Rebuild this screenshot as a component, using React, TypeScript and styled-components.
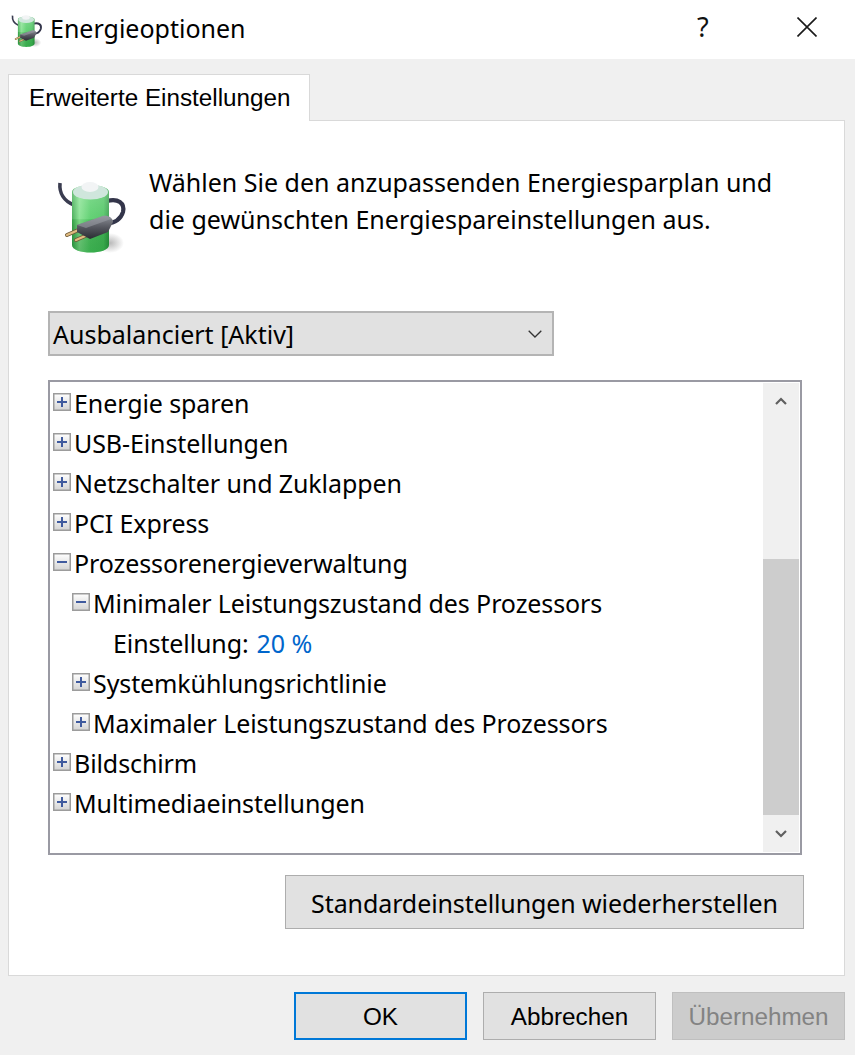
import React from 'react';
import styled, { createGlobalStyle } from 'styled-components';

const GlobalStyle = createGlobalStyle`
  html, body {
    margin: 0;
    padding: 0;
    background: #f0f0f0;
  }
  * {
    box-sizing: border-box;
  }
`;

const UI_FONT = `"Noto Sans", "Open Sans", sans-serif`;
const CONTROL_FONT = `"Liberation Sans", Arial, sans-serif`;

const PowerIcon: React.FC<{ size: number; id: string; className?: string }> = ({ size, id, className }) => (
  <svg className={className} width={size} height={size} viewBox="0 0 80 80" aria-hidden="true">
    <defs>
      <linearGradient id={`${id}-body`} x1="0" y1="0" x2="1" y2="0">
        <stop offset="0" stopColor="#35a648" />
        <stop offset="0.2" stopColor="#7fe08a" />
        <stop offset="0.5" stopColor="#4ecb62" />
        <stop offset="0.85" stopColor="#45c25a" />
        <stop offset="1" stopColor="#2c9a42" />
      </linearGradient>
      <linearGradient id={`${id}-gloss`} x1="0" y1="0" x2="0" y2="1">
        <stop offset="0" stopColor="#ffffff" stopOpacity="0.3" />
        <stop offset="0.5" stopColor="#ffffff" stopOpacity="0.12" />
        <stop offset="0.52" stopColor="#000000" stopOpacity="0.04" />
        <stop offset="1" stopColor="#0a6a20" stopOpacity="0.3" />
      </linearGradient>
      <linearGradient id={`${id}-plug`} x1="0" y1="0" x2="0" y2="1">
        <stop offset="0" stopColor="#8c8f97" />
        <stop offset="0.5" stopColor="#55575f" />
        <stop offset="1" stopColor="#2a2c33" />
      </linearGradient>
      <radialGradient id={`${id}-shadow`}>
        <stop offset="0" stopColor="#8a8a8a" stopOpacity="0.6" />
        <stop offset="1" stopColor="#8a8a8a" stopOpacity="0" />
      </radialGradient>
    </defs>
    <ellipse cx="60" cy="68" rx="14" ry="10" fill={`url(#${id}-shadow)`} />
    <path d="M10 8 C9 18 14 26 24 30" fill="none" stroke="#3a3c50" strokeWidth="3.6" />
    <path d="M57 26 C68 23 75 28 73 37 C71 44 64 48 56 49" fill="none" stroke="#33354a" strokeWidth="4.2" />
    <path d="M22 17 C22 8 59 8 59 17 L59 70 C59 80 22 80 22 70 Z" fill={`url(#${id}-body)`} />
    <path d="M22 17 C22 8 59 8 59 17 L59 70 C59 80 22 80 22 70 Z" fill={`url(#${id}-gloss)`} />
    <ellipse cx="40.5" cy="17" rx="17.5" ry="7.5" fill="#cfe6dc" />
    <ellipse cx="40" cy="12" rx="8.5" ry="5" fill="#f2f4f5" />
    <path d="M33 53 L17 60" stroke="#6f5a38" strokeWidth="4" strokeLinecap="round" />
    <path d="M42 58 L26 65" stroke="#6f5a38" strokeWidth="4" strokeLinecap="round" />
    <path d="M33 53 L17 60" stroke="#e0bb80" strokeWidth="2.4" strokeLinecap="round" />
    <path d="M42 58 L26 65" stroke="#e0bb80" strokeWidth="2.4" strokeLinecap="round" />
    <path d="M27 50 L53 41 C58 40 63 43 63 47 L58 57 L40 64 L27 57 Z" fill={`url(#${id}-plug)`} />
    <path d="M27 50 L53 41 C57 40 60 42 61 44 L36 53 Z" fill="#9b9ea6" opacity="0.55" />
  </svg>
);

const Window = styled.div`
  width: 855px;
  height: 1055px;
  display: flex;
  flex-direction: column;
  overflow: hidden;
  background: #f0f0f0;
  color: #000;
`;

const TitleBar = styled.header`
  height: 59px;
  flex: none;
  display: flex;
  align-items: center;
  padding-left: 8px;
  background: #fff;
`;

const TitleText = styled.h1`
  flex: 1;
  margin: 0 0 4px 6px;
  font: 400 25px ${UI_FONT};
`;

const HelpGlyph = styled.span`
  width: 100px;
  margin-bottom: 6px;
  font: 400 27px ${UI_FONT};
  color: #111;
`;

const CloseButton = styled.svg`
  width: 20px;
  height: 20px;
  margin: 0 38px 6px 0;
`;

const Content = styled.main`
  flex: 1;
  display: flex;
  flex-direction: column;
  padding: 15px 10px 15px 8px;
`;

const TabStrip = styled.div`
  display: flex;
  height: 46px;
  flex: none;
`;

const Tab = styled.div`
  width: 302px;
  height: 47px;
  position: relative;
  z-index: 1;
  display: flex;
  align-items: center;
  padding: 0 0 0 20px;
  background: #fff;
  border: 1px solid #d9d9d9;
  border-bottom: none;
  font: 400 24.25px ${CONTROL_FONT};
`;

const Panel = styled.section`
  height: 856px;
  flex: none;
  display: flex;
  flex-direction: column;
  padding: 0 41px 0 39px;
  background: #fff;
  border: 1px solid #d9d9d9;
`;

const Intro = styled.div`
  height: 190px;
  flex: none;
  display: flex;
  align-items: flex-start;
  padding-top: 43px;
`;

const IntroIcon = styled(PowerIcon)`
  flex: none;
  margin: 11px 0 0 2px;
`;

const IntroText = styled.p`
  margin: 0 0 0 19px;
  font: 400 25px/37px ${UI_FONT};
  white-space: nowrap;
`;

const PlanSelect = styled.div`
  width: 506px;
  height: 45px;
  flex: none;
  display: flex;
  align-items: center;
  justify-content: space-between;
  padding: 0 10px 0 3px;
  background: #e1e1e1;
  border: 2px solid #b4b4b4;
  font: 400 25px ${UI_FONT};
`;

const TreeBox = styled.div`
  width: 754px;
  height: 475px;
  flex: none;
  margin-top: 24px;
  display: flex;
  padding: 1px;
  background: #fff;
  border: 2px solid #9a9aa3;
`;

const TreeList = styled.ul`
  flex: 1;
  margin: 0;
  padding: 1px 0 0 2px;
  list-style: none;
`;

const Row = styled.li<{ $level: number }>`
  height: 40px;
  display: flex;
  align-items: center;
  gap: 3px;
  padding-left: ${p => p.$level * 19}px;
  padding-bottom: 2px;
  font: 400 25px ${UI_FONT};
  letter-spacing: -0.1px;
  white-space: nowrap;
`;

const Expander = styled.svg`
  width: 18px;
  height: 18px;
  flex: none;
  margin-bottom: 2px;
`;

const SettingLabel = styled.span`
  padding-left: 60px;
`;

const SettingValue = styled.span`
  margin-left: 5px;
  color: #0066cc;
`;

const ScrollBar = styled.div`
  width: 36px;
  flex: none;
  display: flex;
  flex-direction: column;
  background: #f0f0f0;
`;

const ScrollArrow = styled.div`
  height: 36px;
  flex: none;
  display: flex;
  align-items: center;
  justify-content: center;
`;

const ScrollTrack = styled.div`
  flex: 1;
  padding-top: 140px;
`;

const ScrollThumb = styled.div`
  height: 256px;
  background: #cdcdcd;
`;

const ResetButton = styled.button`
  width: 519px;
  height: 54px;
  flex: none;
  align-self: flex-end;
  margin: 20px -1px 0 0;
  padding: 2px 0 0;
  background: #e1e1e1;
  border: 1px solid #adadad;
  color: #000;
  font: 400 25px ${UI_FONT};
  letter-spacing: -0.1px;
`;

const Footer = styled.footer`
  display: flex;
  justify-content: flex-end;
  gap: 16px;
  margin-top: 16px;
`;

const DialogButton = styled.button<{ $primary?: boolean }>`
  width: 173px;
  height: 48px;
  padding: 2px 0 0;
  background: ${p => (p.disabled ? '#cccccc' : '#e1e1e1')};
  border: ${p => (p.$primary ? '2px solid #0078d7' : `1px solid ${p.disabled ? '#bfbfbf' : '#adadad'}`)};
  color: ${p => (p.disabled ? '#838383' : '#000')};
  font: 400 24.25px ${CONTROL_FONT};
`;

const PlusMinus: React.FC<{ open?: boolean; id: string }> = ({ open, id }) => (
  <Expander viewBox="0 0 18 18" aria-hidden="true">
    <defs>
      <linearGradient id={id} x1="0" y1="0" x2="0" y2="1">
        <stop offset="0" stopColor="#ffffff" />
        <stop offset="1" stopColor="#d4d4d4" />
      </linearGradient>
    </defs>
    <rect x="0.75" y="0.75" width="16.5" height="16.5" fill={`url(#${id})`} stroke="#9c9c9c" strokeWidth="1.5" />
    <rect x="4" y="8" width="10" height="2" fill="#3f5a9e" />
    {!open && <rect x="8" y="4" width="2" height="10" fill="#3f5a9e" />}
  </Expander>
);

const tree: { label: string; level: number; open?: boolean }[] = [
  { label: 'Energie sparen', level: 0 },
  { label: 'USB-Einstellungen', level: 0 },
  { label: 'Netzschalter und Zuklappen', level: 0 },
  { label: 'PCI Express', level: 0 },
  { label: 'Prozessorenergieverwaltung', level: 0, open: true },
  { label: 'Minimaler Leistungszustand des Prozessors', level: 1, open: true },
];

const treeRest: { label: string; level: number }[] = [
  { label: 'Systemkühlungsrichtlinie', level: 1 },
  { label: 'Maximaler Leistungszustand des Prozessors', level: 1 },
  { label: 'Bildschirm', level: 0 },
  { label: 'Multimediaeinstellungen', level: 0 },
];

const App: React.FC = () => (
  <>
    <GlobalStyle />
    <Window>
      <TitleBar>
        <PowerIcon size={36} id="title-icon" />
        <TitleText>Energieoptionen</TitleText>
        <HelpGlyph>?</HelpGlyph>
        <CloseButton viewBox="0 0 20 20" aria-hidden="true">
          <path d="M0.5 0.5 L19.5 19.5 M19.5 0.5 L0.5 19.5" stroke="#1a1a1a" strokeWidth="1.6" fill="none" />
        </CloseButton>
      </TitleBar>
      <Content>
        <TabStrip>
          <Tab>Erweiterte Einstellungen</Tab>
        </TabStrip>
        <Panel>
          <Intro>
            <IntroIcon size={80} id="intro-icon" />
            <IntroText>
              Wählen Sie den anzupassenden Energiesparplan und
              <br />
              die gewünschten Energiespareinstellungen aus.
            </IntroText>
          </Intro>
          <PlanSelect>
            Ausbalanciert [Aktiv]
            <svg width="14" height="8" viewBox="0 0 14 8" aria-hidden="true">
              <path d="M0.7 0.7 L7 7 L13.3 0.7" fill="none" stroke="#333" strokeWidth="1.3" />
            </svg>
          </PlanSelect>
          <TreeBox>
            <TreeList>
              {tree.map((row, i) => (
                <Row key={row.label} $level={row.level}>
                  <PlusMinus open={row.open} id={`exp-${i}`} />
                  {row.label}
                </Row>
              ))}
              <Row $level={0}>
                <SettingLabel>Einstellung:</SettingLabel>
                <SettingValue>20 %</SettingValue>
              </Row>
              {treeRest.map((row, i) => (
                <Row key={row.label} $level={row.level}>
                  <PlusMinus id={`exp-rest-${i}`} />
                  {row.label}
                </Row>
              ))}
            </TreeList>
            <ScrollBar>
              <ScrollArrow>
                <svg width="12" height="8" viewBox="0 0 12 8" aria-hidden="true">
                  <path d="M1 7 L6 2 L11 7" fill="none" stroke="#606060" strokeWidth="2.2" />
                </svg>
              </ScrollArrow>
              <ScrollTrack>
                <ScrollThumb />
              </ScrollTrack>
              <ScrollArrow>
                <svg width="12" height="8" viewBox="0 0 12 8" aria-hidden="true">
                  <path d="M1 1 L6 6 L11 1" fill="none" stroke="#606060" strokeWidth="2.2" />
                </svg>
              </ScrollArrow>
            </ScrollBar>
          </TreeBox>
          <ResetButton>Standardeinstellungen wiederherstellen</ResetButton>
        </Panel>
        <Footer>
          <DialogButton $primary>OK</DialogButton>
          <DialogButton>Abbrechen</DialogButton>
          <DialogButton disabled>Übernehmen</DialogButton>
        </Footer>
      </Content>
    </Window>
  </>
);

export default App;
